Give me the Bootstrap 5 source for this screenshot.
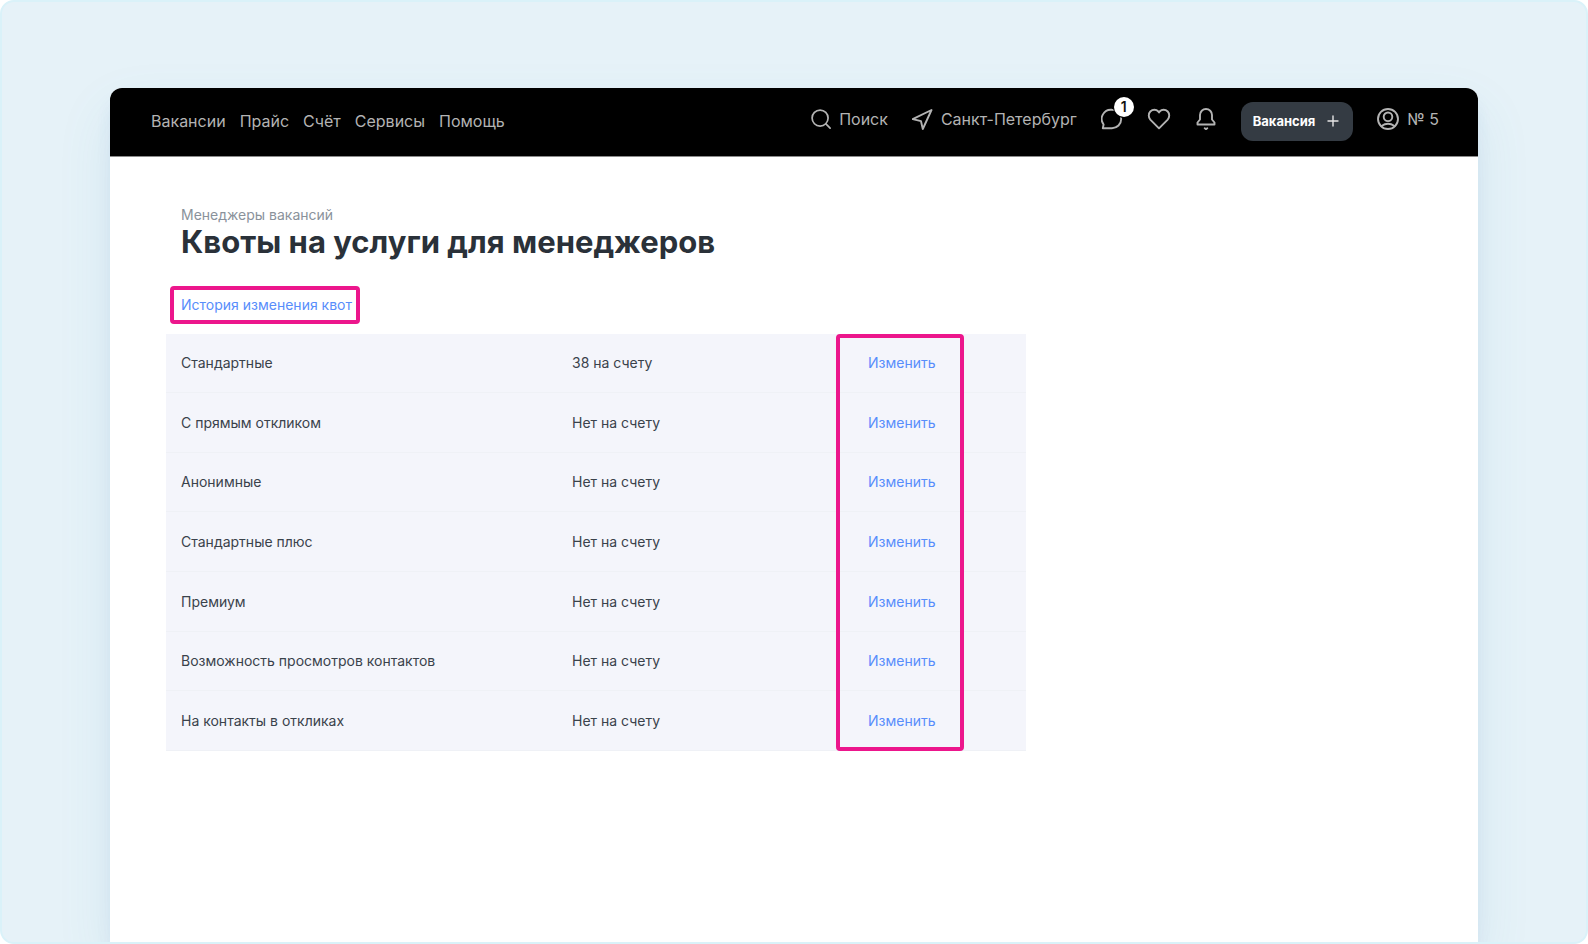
<!DOCTYPE html>
<html lang="ru">
<head>
<meta charset="utf-8">
<meta name="viewport" content="width=device-width, initial-scale=1">
<title>Квоты на услуги для менеджеров</title>
<link rel="stylesheet" href="https://cdn.jsdelivr.net/npm/bootstrap@5.3.0/dist/css/bootstrap.min.css">
<style>
  body { font-family: Inter, "Liberation Sans", sans-serif; font-size: 14px; line-height: 20px; color: #3a424b; background: #fff; }
  a { color: #588dfb; text-decoration: none; }
  .stage { border: 2px solid #daf2f9; border-radius: 14px; background: #e6f2f8; padding: 86px 108px 0; overflow: hidden; }
  .sheet { border-radius: 12px 12px 0 0; background: #fff; box-shadow: 0 24px 56px rgba(60, 150, 180, .1), 0 14px 16px rgba(60, 100, 180, .07); }
  .topbar { background: #000; border-bottom: 1px solid #8b8b8b; border-radius: 12px 12px 0 0; min-height: 69px; padding: 0 39px 4px 41px; font-size: 16px; }
  .topbar a { color: #b3b3b3; }
  .topbar svg { display: block; fill: none; stroke: #b3b3b3; stroke-width: 1.9; stroke-linecap: round; stroke-linejoin: round; }
  .menu-links { gap: 14px; padding-top: 2px; }
  .tools { gap: 24px; padding-bottom: 2px; }
  .counter { top: -11px; left: 13px; width: 20px; height: 20px; font-size: 14px; font-weight: 600; background: #fff; color: #111; box-shadow: 0 0 0 1px #000; }
  .btn-post { background: #343b43; color: #fff; border: 0; border-radius: 12px; height: 39px; padding: 0 12px; font-size: 13px; font-weight: 700; margin-top: 4px; gap: 10px; }
  .topbar .btn-post svg { stroke: #e6e6e6; stroke-width: 1.4; }
  .page-body { padding: 48px 56px 40px; }
  .crumb { color: #8a929b; padding-left: 15px; }
  h1 { font-size: 31px; line-height: 34px; font-weight: 700; color: #2a3139; padding-left: 15px; margin: 0; }
  .marked { border: 4px solid #ec168c; border-radius: 4px; }
  .history { margin: 27px 0 10px 4px; padding: 5px 4px 5px 7px; }
  .quota-box { max-width: 860px; }
  .quotas { height: 417px; margin: 0; table-layout: fixed; background: #f4f5fb; }
  .quotas td { padding: 1px 15px 0; border-bottom: 1px solid #eff1f6; background: transparent; color: #3a424b; vertical-align: middle; }
  .col-name { width: 391px; }
  .col-left { width: 296px; }
  .column-mark { left: 670px; width: 128px; pointer-events: none; }
</style>
</head>
<body>
<div class="stage min-vh-100 d-flex flex-column">
  <div class="sheet flex-grow-1">
    <header class="topbar d-flex align-items-center justify-content-between">
      <nav class="menu-links d-flex" aria-label="Разделы">
        <a href="#">Вакансии</a><a href="#">Прайс</a><a href="#">Счёт</a><a href="#">Сервисы</a><a href="#">Помощь</a>
      </nav>
      <div class="tools d-flex align-items-center">
        <a href="#" class="d-flex align-items-center gap-2">
          <svg width="20" height="20" viewBox="0 0 22 22"><circle cx="10" cy="10" r="8.8"/><path d="m16.400 16.400 4.600 4.600"/></svg>Поиск</a>
        <a href="#" class="d-flex align-items-center gap-2">
          <svg width="21" height="22" viewBox="2 0 21 22"><path d="M21.500 2 2.700 11.200l8.300 2 1.800 7.800z"/></svg>Санкт-Петербург</a>
        <a href="#" class="position-relative" aria-label="Сообщения">
          <svg width="22" height="22" viewBox="0 0 22 22"><path d="M11 1.800A9.200 9.200 0 1 1 11 20.200H1.800L2.600 16.500A9.200 9.200 0 0 1 11 1.800z"/></svg>
          <span class="counter position-absolute rounded-circle d-flex align-items-center justify-content-center">1</span></a>
        <a href="#" aria-label="Избранное">
          <svg width="24" height="22" viewBox="0 0 24 22"><path d="M12 20.300 3.300 11.600C1.300 9.400 1.200 5.700 3.300 3.500 5.600 1.200 9.200 1.200 11.300 3.500l.7.900.7-.9c2.100-2.300 5.700-2.300 8 0 2.100 2.200 2 5.900 0 8.100z"/></svg></a>
        <a href="#" aria-label="Уведомления">
          <svg width="22" height="24" viewBox="0 0 22 24"><path d="M5 8a6 6 0 0 1 12 0v4.500l2.500 3v2H2.500v-2l2.500-3zM9.700 21.300l1.300.8 1.300-.8"/></svg></a>
        <button type="button" class="btn-post d-flex align-items-center">Вакансия
          <svg width="16" height="16" viewBox="0 0 16 16"><path d="M8 3v10M3 8h10"/></svg></button>
        <a href="#" class="d-flex align-items-center gap-2">
          <svg width="22" height="22" viewBox="0 0 22 22"><circle cx="11" cy="11" r="10"/><circle cx="11" cy="8.800" r="4.300"/><path d="M4.500 18q6.500-4.600 13 0"/></svg>№ 5</a>
      </div>
    </header>
    <main class="page-body">
      <div class="crumb">Менеджеры вакансий</div>
      <h1>Квоты на услуги для менеджеров</h1>
      <a href="#" class="history marked d-table">История изменения квот</a>
      <div class="quota-box position-relative">
        <table class="table quotas">
          <colgroup><col class="col-name"><col class="col-left"><col></colgroup>
          <tbody>
            <tr><td>Стандартные</td><td>38 на счету</td><td><a href="#">Изменить</a></td></tr>
            <tr><td>С прямым откликом</td><td>Нет на счету</td><td><a href="#">Изменить</a></td></tr>
            <tr><td>Анонимные</td><td>Нет на счету</td><td><a href="#">Изменить</a></td></tr>
            <tr><td>Стандартные плюс</td><td>Нет на счету</td><td><a href="#">Изменить</a></td></tr>
            <tr><td>Премиум</td><td>Нет на счету</td><td><a href="#">Изменить</a></td></tr>
            <tr><td>Возможность просмотров контактов</td><td>Нет на счету</td><td><a href="#">Изменить</a></td></tr>
            <tr><td>На контакты в откликах</td><td>Нет на счету</td><td><a href="#">Изменить</a></td></tr>
          </tbody>
        </table>
        <div class="column-mark marked position-absolute top-0 bottom-0"></div>
      </div>
    </main>
  </div>
</div>
<script src="https://cdn.jsdelivr.net/npm/bootstrap@5.3.0/dist/js/bootstrap.bundle.min.js"></script>
</body>
</html>
